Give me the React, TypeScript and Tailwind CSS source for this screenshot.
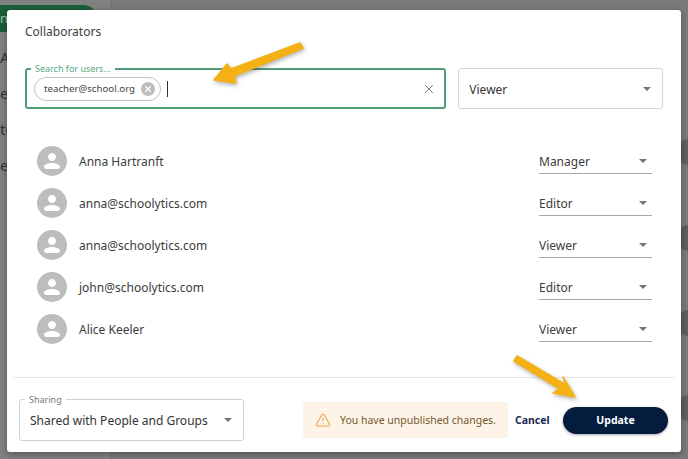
import { TriangleAlert, X } from 'lucide-react'

const users = [
  { name: 'Anna Hartranft', role: 'Manager' },
  { name: 'anna@schoolytics.com', role: 'Editor' },
  { name: 'anna@schoolytics.com', role: 'Viewer' },
  { name: 'john@schoolytics.com', role: 'Editor' },
  { name: 'Alice Keeler', role: 'Viewer' },
]

function Caret() {
  return (
    <svg viewBox="0 0 8 4" className="w-[8px] h-[4px] shrink-0">
      <path d="M0 0h8L4 4z" fill="#757575" />
    </svg>
  )
}

function Avatar() {
  return (
    <div className="w-[30px] h-[30px] rounded-full bg-[#bdbdbd] flex items-center justify-center shrink-0">
      <svg viewBox="0 0 24 24" className="w-[24px] h-[24px]" fill="#fff">
        <path d="M12 12c2.2 0 4-1.8 4-4s-1.8-4-4-4-4 1.8-4 4 1.8 4 4 4zm0 2c-2.7 0-8 1.3-8 3.6 0 1.3.9 2.4 2.4 2.4h11.2c1.5 0 2.4-1.1 2.4-2.4 0-2.3-5.3-3.6-8-3.6z" />
      </svg>
    </div>
  )
}

function Arrow({ d }: { d: string }) {
  return (
    <svg viewBox="0 0 688 459" className="absolute inset-0 w-[688px] h-[459px] drop-shadow-[1px_2px_2px_rgba(0,0,0,0.3)]">
      <path d={d} fill="#f5b014" stroke="#f5b014" strokeWidth="1.5" strokeLinejoin="round" />
    </svg>
  )
}

export default function App() {
  return (
    <div className="relative w-[688px] h-[459px] overflow-hidden bg-[#7a7a7a] font-['Noto_Sans',sans-serif] text-[#333]">
      {/* page behind the dialog */}
      <div className="absolute left-0 top-0 w-[112px] h-[459px] bg-[#808080] border-r border-[#727272] text-[15px] leading-[23px] text-[#333]">
        <div className="w-[96px] h-[27px] mt-[5px] pt-[2px] rounded-r-[12px] bg-[#1b5e3a] text-[#9fc4ae] text-[13px]">n</div>
        <div className="mt-[14px]">A</div>
        <div className="mt-[13px]">er</div>
        <div className="mt-[13px]">to</div>
        <div className="mt-[13px]">es</div>
      </div>
      <div className="absolute left-[678px] top-[139px] w-[10px] h-[26px] rounded-l-full bg-[#5f5f5f]" />
      <div className="absolute left-[678px] top-[225px] w-[10px] h-[26px] rounded-l-full bg-[#5f5f5f]" />
      <div className="absolute left-[678px] top-[310px] w-[10px] h-[26px] rounded-l-full bg-[#5f5f5f]" />
      <div className="absolute left-[678px] top-[395px] w-[10px] h-[26px] rounded-l-full bg-[#5f5f5f]" />

      {/* dialog */}
      <div className="absolute left-[7px] top-[10px] w-[674px] h-[442px] bg-white rounded-[3px] shadow-[0_2px_6px_rgba(0,0,0,0.35)] flex flex-col">
        <h2 className="pl-[18px] pt-[12px] h-[58px] text-[12px] leading-[20px] text-[#3c3c3c]">Collaborators</h2>

        <div className="flex gap-[12px] pl-[18px] pr-[18px]">
          <div className="relative w-[422px] h-[41px] rounded-[3px] border-2 border-[#4f9e77] flex items-center pl-[7px] pr-[8px]">
            <span className="absolute left-[4px] -top-[8px] bg-white px-[4px] text-[9px] leading-[13px] text-[#58a982]">Search for users...</span>
            <div className="flex items-center h-[24px] w-[127px] rounded-full border border-[#c4c4c4] pl-[9px] pr-[5px] justify-between">
              <span className="pt-[2px] text-[9.7px] text-[#444]">teacher@school.org</span>
              <span className="w-[14px] h-[14px] rounded-full bg-[#bdbdbd] flex items-center justify-center">
                <X className="w-[10px] h-[10px] text-white" strokeWidth={3} />
              </span>
            </div>
            <div className="ml-[6px] w-px h-[16px] bg-[#333]" />
            <X className="ml-auto w-[14px] h-[14px] text-[#666]" strokeWidth={1.5} />
          </div>
          <div className="w-[205px] h-[41px] rounded-[3px] border border-[#d6d6d6] flex items-center justify-between pl-[10px] pr-[11px]">
            <span className="pt-[2px] text-[12px] text-[#333]">Viewer</span>
            <Caret />
          </div>
        </div>

        <div className="flex flex-col mt-[31px] pl-[30px] pr-[29px]">
          {users.map((u, i) => (
            <div key={i} className="h-[42px] flex items-center">
              <Avatar />
              <span className="ml-[12px] pt-[2px] text-[12px] text-[#3c3c3c]">{u.name}</span>
              <div className="ml-auto w-[113px] h-[24px] mt-[1px] border-b border-[#a8a8a8] flex items-center justify-between pr-[5px]">
                <span className="pt-[2px] text-[12px] text-[#3c3c3c]">{u.role}</span>
                <Caret />
              </div>
            </div>
          ))}
        </div>

        <div className="mt-[27px] mx-[6px] border-t border-[#e8e8e8]" />

        <div className="flex items-center mt-[21px] pl-[12px] pr-[13px]">
          <div className="relative w-[225px] h-[42px] rounded-[3px] border border-[#d0d0d0] flex items-center justify-between pl-[10px] pr-[11px]">
            <span className="absolute left-[5px] -top-[7px] bg-white px-[4px] text-[9px] leading-[13px] text-[#777]">Sharing</span>
            <span className="pt-[2px] text-[12px] text-[#333]">Shared with People and Groups</span>
            <Caret />
          </div>
          <div className="ml-[59px] w-[205px] h-[36px] rounded-[2px] bg-[#fdf3e7] flex items-center pl-[12px]">
            <TriangleAlert className="w-[16px] h-[16px] text-[#eda24e]" strokeWidth={1.6} />
            <span className="ml-[9px] pt-[2px] text-[10.5px] text-[#74582f]">You have unpublished changes.</span>
          </div>
          <button className="ml-[7px] pt-[2px] text-[10.5px] font-bold text-[#1a2b50]">Cancel</button>
          <button className="ml-auto w-[105px] h-[27px] pt-[2px] rounded-full bg-[#041c3d] text-white text-[10.5px] font-bold shadow-[0_1px_3px_rgba(0,0,0,0.35)]">Update</button>
        </div>
      </div>

      {/* annotation arrows */}
      <Arrow d="M214 80 L227 64 L231 69 L300 43 L303 48 L234 76 L236 83 Z" />
      <Arrow d="M517 356 L566 385 L563 377 L575 397 L553 393 L560 389 L514 361 Z" />
    </div>
  )
}
